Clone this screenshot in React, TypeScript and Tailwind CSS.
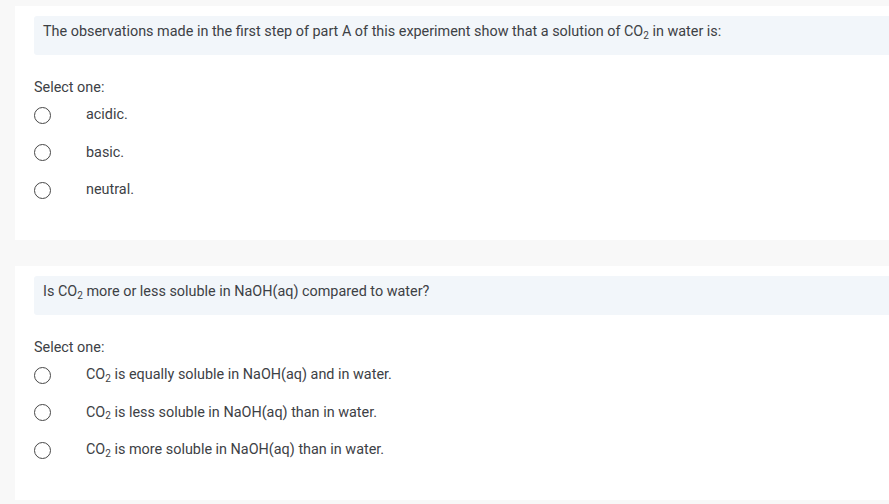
import React from 'react';

type Option = React.ReactNode;

const Sub = () => <sub className="text-[10px]">2</sub>;

const CO2 = () => (
  <>
    CO<Sub />
  </>
);

const Radio = () => (
  <span className="block w-[17px] h-[17px] shrink-0 rounded-full border-[1.5px] border-[#474747]" />
);

const Question: React.FC<{text: React.ReactNode; options: Option[]}> = ({text, options}) => {
  return (
    <div className="bg-white ml-[15px] pt-[10px] pl-[19px] pb-[31px]">
      {/* Question text */}
      <div className="h-[39px] bg-[#f2f6fa] rounded-l-[3px] pl-[9px] pt-[5px] leading-[21px]">
        {text}
      </div>

      <div className="mt-[23.5px] leading-[18px]">Select one:</div>

      {/* Answers */}
      <div className="flex flex-col">
        {options.map((opt, i) => (
          <div key={i} className="h-[37.5px] flex items-center">
            <Radio />
            <div className="ml-[35px]">{opt}</div>
          </div>
        ))}
      </div>
    </div>
  );
};

export default function App() {
  return (
    <div
      className="min-h-screen bg-[#f8f8f8] pt-[6px] text-[14.4px] text-[#3d4145] overflow-hidden"
      style={{fontFamily: 'Roboto, "Noto Sans", sans-serif'}}>
      <Question
        text={
          <>
            The observations made in the first step of part A of this experiment show that a solution of <CO2 /> in water
            is:
          </>
        }
        options={['acidic.', 'basic.', 'neutral.']}
      />
      <div className="h-[26px]" />
      <Question
        text={
          <>
            Is <CO2 /> more or less soluble in NaOH(aq) compared to water?
          </>
        }
        options={[
          <>
            <CO2 /> is equally soluble in NaOH(aq) and in water.
          </>,
          <>
            <CO2 /> is less soluble in NaOH(aq) than in water.
          </>,
          <>
            <CO2 /> is more soluble in NaOH(aq) than in water.
          </>,
        ]}
      />
    </div>
  );
}
